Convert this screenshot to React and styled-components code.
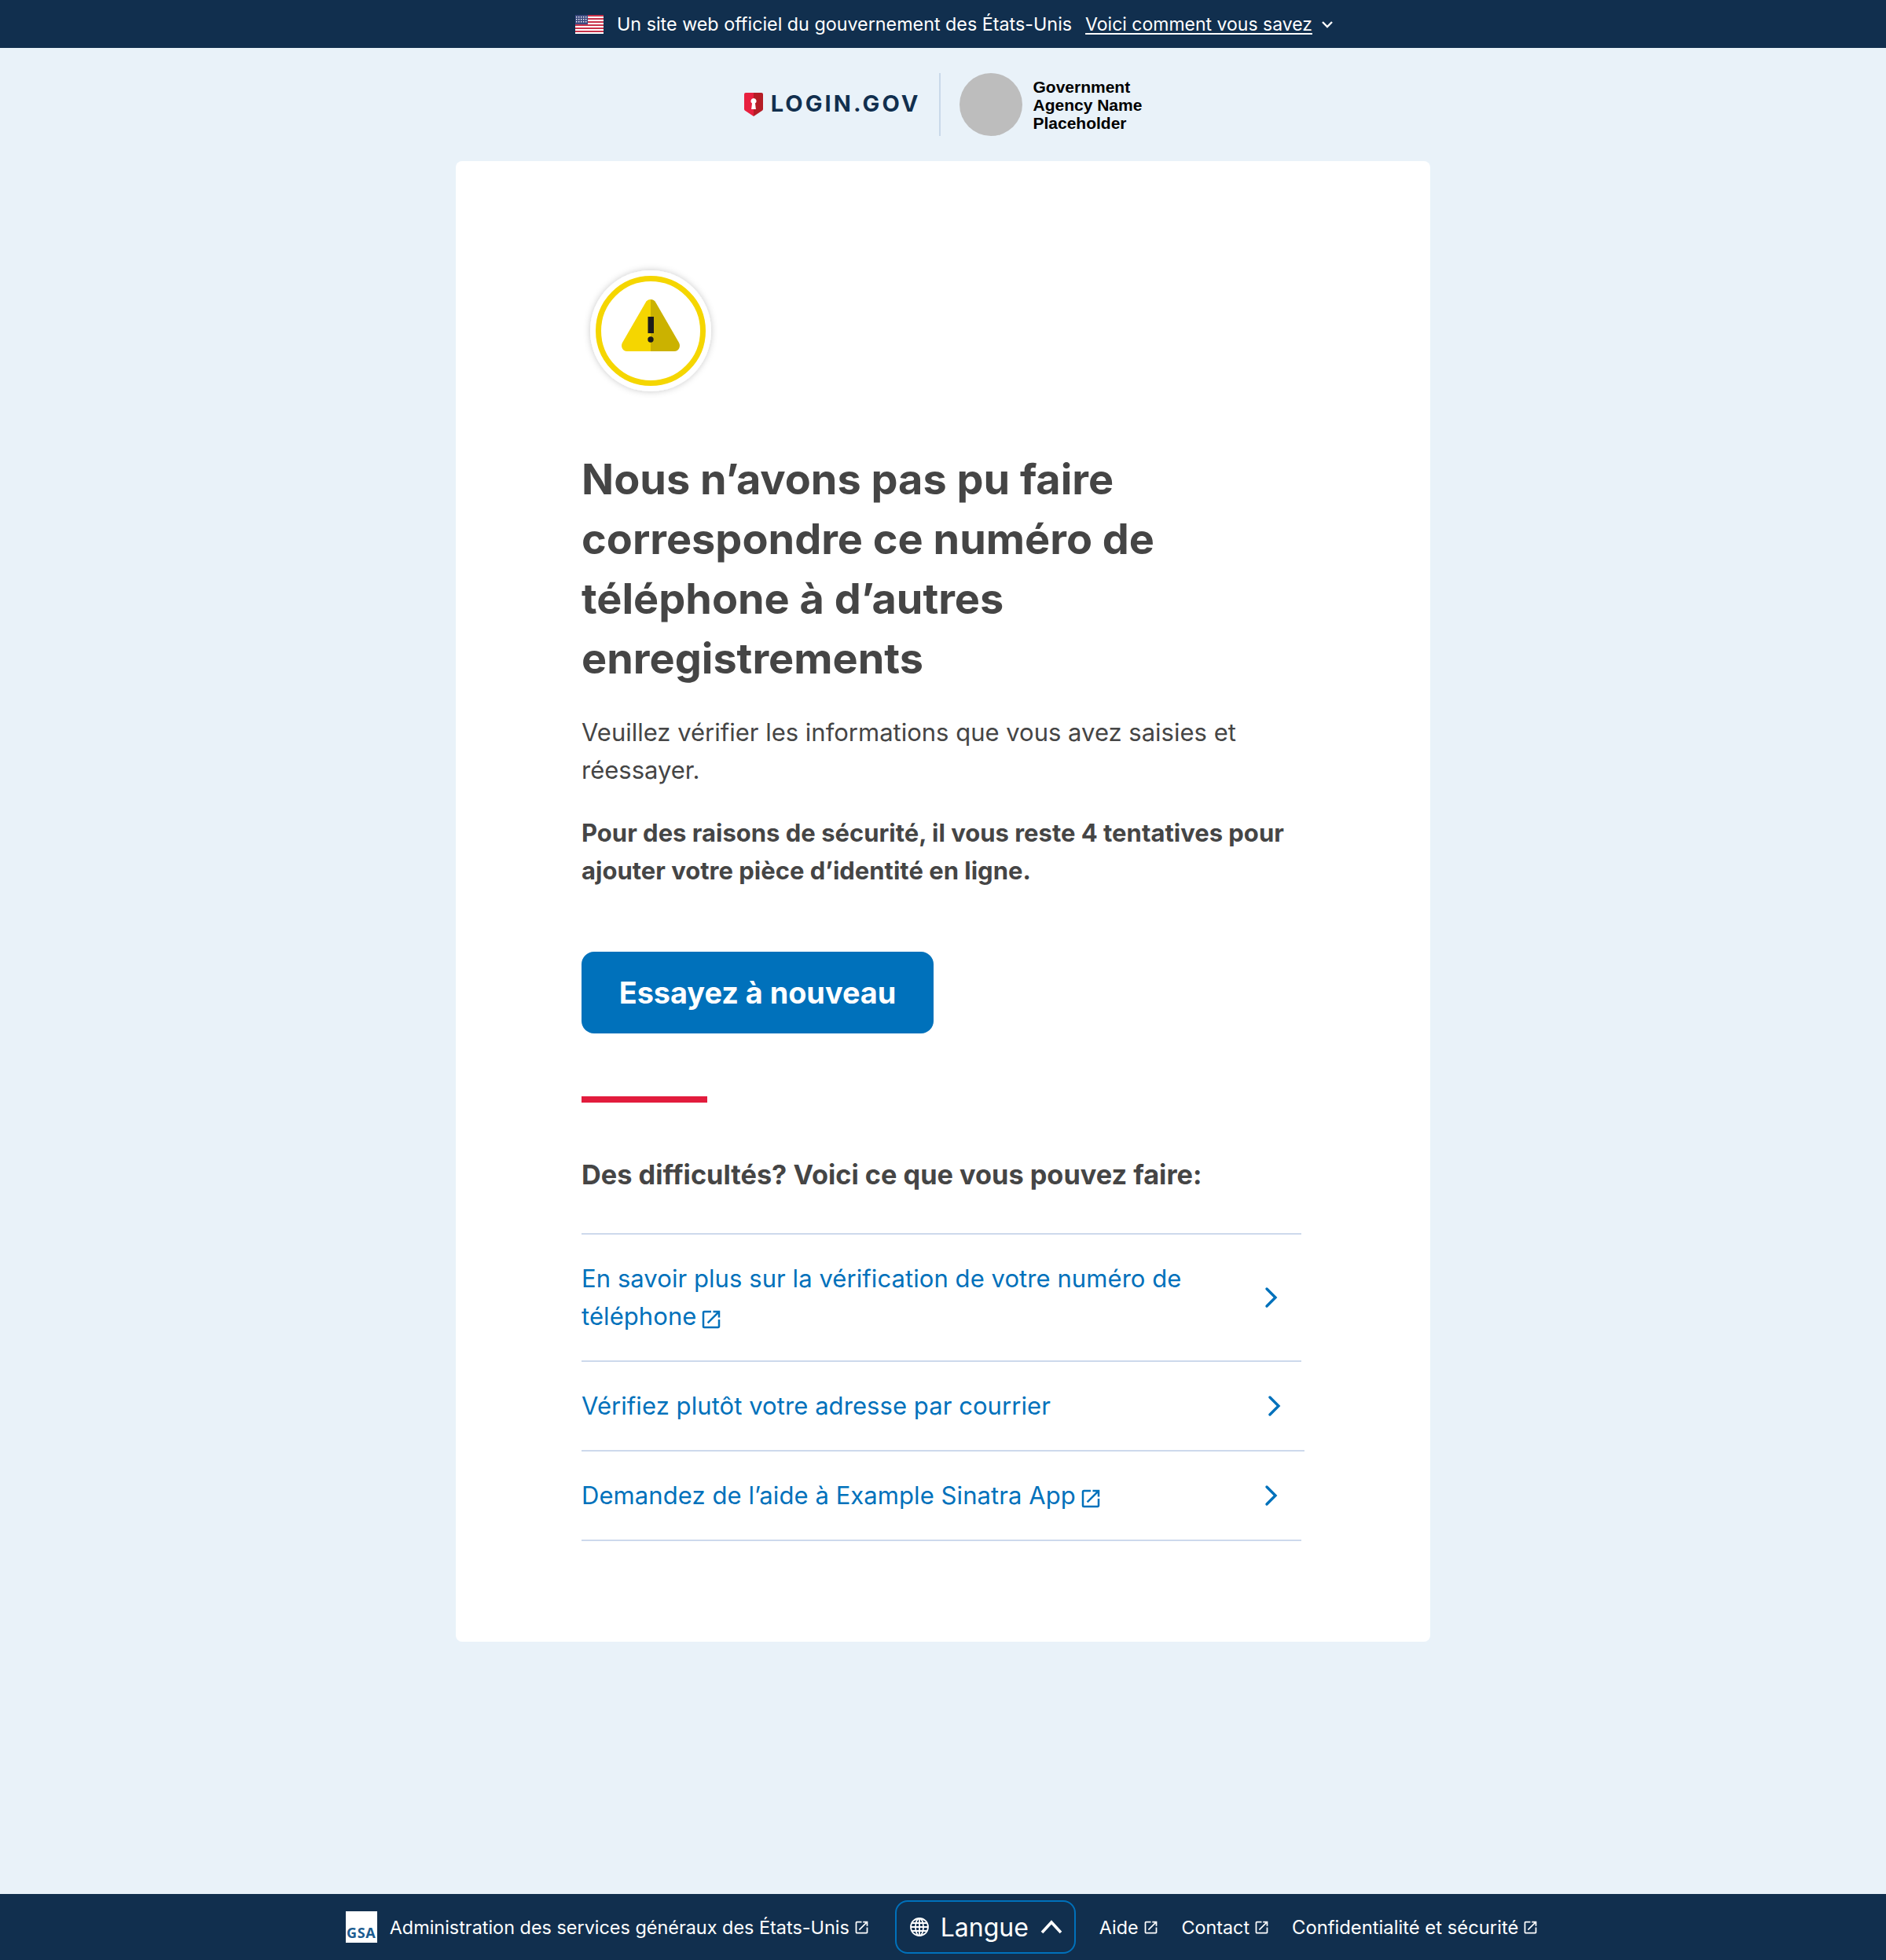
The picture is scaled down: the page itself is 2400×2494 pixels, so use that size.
import React from "react";
import styled, { createGlobalStyle } from "styled-components";

const Global = createGlobalStyle`
  html, body { margin: 0; padding: 0; background: #e9f2f9; }
  * { box-sizing: border-box; }
  body { font-family: Inter, "Noto Sans", sans-serif; color: #454545; }
`;
const Page = styled.div`
  min-height: 2494px; display: flex; flex-direction: column; background: #e9f2f9;
`;
const Banner = styled.div`
  height: 61px; background: #112f4e; color: #fff; display: flex; align-items: center;
  justify-content: center; font-size: 23.3px; padding-left: 30px;
`;
const BannerText = styled.span` margin-left: 17px; `;
const BannerLink = styled.a`
  margin-left: 17px; color: #fff; font-size: 23px; text-decoration: underline; text-underline-offset: 3px;
`;
const BannerChevron = styled.svg` margin-left: 10px; width: 18px; height: 18px; `;
const Header = styled.header`
  height: 144px; display: flex; align-items: center; justify-content: center;
`;
const Logo = styled.div`
  display: flex; align-items: center; gap: 10px; padding-right: 24px;
`;
const LogoText = styled.span`
  font-size: 29px; font-weight: 700; color: #112f4e; letter-spacing: 3.1px; line-height: 1; padding-bottom: 3px;
`;
const Partner = styled.div`
  display: flex; align-items: center; gap: 13px; border-left: 2px solid #c9d9ea; padding-left: 24px; height: 80px;
`;
const AgencyCircle = styled.div` width: 80px; height: 80px; border-radius: 50%; background: #bdbdbd; `;
const AgencyName = styled.div`
  font-family: "Liberation Sans", Arial, sans-serif; font-weight: 700; font-size: 21px; line-height: 23px; color: #000;
`;
const Card = styled.main`
  width: 1240px; margin: 0 auto; background: #fff; border-radius: 8px; padding: 128px 160px;
`;
const Heading = styled.h1`
  margin: 63px 0 0; font-size: 54px; line-height: 76px; font-weight: 700; color: #454545; width: 780px;
`;
const Para = styled.p`
  margin: ${p => p.$top}px 0 0; font-size: 31px; line-height: 48px; font-weight: ${p => p.$bold ? 700 : 400};
`;
const Primary = styled.button`
  display: block; margin-top: 79px; width: 448px; height: 104px; border: 0; border-radius: 16px; background: #0071bb; color: #fff;
  font: 700 37.8px Inter, sans-serif;
`;
const Rule = styled.div` margin-top: 80px; width: 160px; height: 8px; background: #e21c3d; `;
const Troubles = styled.h2`
  margin: 68px 0 0; font-size: 34.3px; line-height: 48px; font-weight: 700;
`;
const Links = styled.ul`
  list-style: none; margin: 50px 0 0; padding: 0; border-top: 2px solid #cdd9ec; width: 916px;
`;
const Row = styled.li`
  display: flex; align-items: center; justify-content: space-between; width: ${p => p.$wide ? 920 : 916}px;
  padding: 32px 28px 32px 0; border-bottom: 2px solid #cdd9ec;
  font-size: 31px; line-height: 48px; letter-spacing: 0.07px; color: #0071bb;
`;
const RowText = styled.span` width: 800px; `;
const Ext = styled.svg`
  width: ${p => p.$s}px; height: ${p => p.$s}px; margin-left: ${p => p.$m}px; vertical-align: ${p => p.$v}px; fill: currentColor;
`;
const Spacer = styled.div` flex: 1; `;
const Footer = styled.footer`
  height: 84px; background: #112f4e; color: #fff; display: flex; align-items: center; justify-content: center;
  font-size: 23.3px; padding-right: 2px;
`;
const Gsa = styled.div`
  width: 40px; height: 40px; background: #fff; color: #1c5c90; font: 700 18px/1 "Noto Sans", sans-serif; letter-spacing: 0.6px;
  display: flex; align-items: flex-end; justify-content: center; margin-right: 16px; padding-bottom: 4px;
`;
const FootLink = styled.span`
  display: inline-flex; align-items: center; margin-left: ${p => p.$m || 0}px; font-size: ${p => p.$fs || 23.3}px;
`;
const LangBtn = styled.div`
  margin: 0 30px 0 32px; width: 230px; height: 68px; border: 2px solid #0071bb; border-radius: 16px; display: flex; align-items: center;
  padding: 0 14px 0 16px; font-size: 32px; justify-content: space-between;
`;

const ExtIcon = ({ s = 21, m = 5, v = -3 }) => (
  <Ext $s={s} $m={m} $v={v} viewBox="0 0 24 24">
    <path d="M19 19H5V5h7V3H5a2 2 0 0 0-2 2v14a2 2 0 0 0 2 2h14c1.1 0 2-.9 2-2v-7h-2v7zM14 3v2h3.59l-9.83 9.83 1.41 1.41L19 6.41V10h2V3h-7z" />
  </Ext>
);
const Chevron = () => (
  <svg width="24" height="28" viewBox="0 0 24 28" fill="none" stroke="#0071bb" strokeWidth="3.4" strokeLinecap="round"><path d="M8 3l11 11L8 25" /></svg>
);
const Flag = () => (
  <svg width="36" height="24" viewBox="0 0 36 24">
    <rect width="36" height="24" fill="#fff" />
    {[0, 4, 8, 12, 16, 20].map(y => <rect key={y} y={y} width="36" height="2" fill="#c8324a" />)}
    <rect width="16" height="12" fill="#3c4a80" />
    {[2, 5, 8].map(y => [2, 5, 8, 11, 14].map(x => <rect key={x + "-" + y} x={x - 1} y={y} width="1.4" height="1.4" fill="#fff" />))}
  </svg>
);
const Shield = () => (
  <svg width="24" height="30" viewBox="0 0 24 30">
    <path d="M0 2a2 2 0 0 1 2-2h10v30L1.500 23A3 3 0 0 1 0 20z" fill="#e8203f" />
    <path d="M24 2a2 2 0 0 0-2-2H12v30l10.500-7a3 3 0 0 0 1.500-3z" fill="#b51d26" />
    <path d="M12 7a3.600 3.600 0 0 1 2 6.600l.9 7.400h-5.800l.9-7.400A3.600 3.600 0 0 1 12 7z" fill="#fff" />
  </svg>
);
const Warning = () => (
  <svg width="176" height="176" viewBox="0 0 176 176" style={{ display: "block" }}>
    <defs>
      <filter id="s" x="-20%" y="-20%" width="140%" height="140%"><feDropShadow dx="0" dy="0" stdDeviation="4" floodColor="#000" floodOpacity=".22" /></filter>
    </defs>
    <circle cx="88" cy="88" r="77" fill="#fff" filter="url(#s)" />
    <circle cx="88" cy="88" r="66.5" fill="#fff" stroke="#f5d600" strokeWidth="7" />
    <path d="M88 48c-3 0-5 1.5-6.5 4L52 103c-2.500 4.500 0 11 6 11h30z" fill="#f5d600" />
    <path d="M88 48c3 0 5 1.500 6.500 4L124 103c2.500 4.500 0 11-6 11H88z" fill="#cbb200" />
    <rect x="84.500" y="70" width="7.500" height="21" fill="#1b1b1b" />
    <circle cx="88" cy="99" r="3.700" fill="#1b1b1b" />
  </svg>
);

export default function App() {
  return (
    <Page>
      <Global />
      <Banner>
        <Flag />
        <BannerText>Un site web officiel du gouvernement des États-Unis</BannerText>
        <BannerLink>Voici comment vous savez</BannerLink>
        <BannerChevron viewBox="0 0 18 18" fill="none" stroke="#fff" strokeWidth="2.400"><path d="M3 6l6 6 6-6" /></BannerChevron>
      </Banner>
      <Header>
        <Logo><Shield /><LogoText>LOGIN.GOV</LogoText></Logo>
        <Partner>
          <AgencyCircle />
          <AgencyName>Government<br />Agency Name<br />Placeholder</AgencyName>
        </Partner>
      </Header>
      <Card>
        <Warning />
        <Heading>Nous n’avons pas pu faire correspondre ce numéro de téléphone à d’autres enregistrements</Heading>
        <Para $top={32}>Veuillez vérifier les informations que vous avez saisies et réessayer.</Para>
        <Para $top={32} $bold>Pour des raisons de sécurité, il vous reste 4 tentatives pour ajouter votre pièce d’identité en ligne.</Para>
        <Primary>Essayez à nouveau</Primary>
        <Rule />
        <Troubles>Des difficultés? Voici ce que vous pouvez faire:</Troubles>
        <Links>
          <Row><RowText>En savoir plus sur la vérification de votre numéro de téléphone<ExtIcon s={30} m={4} v={-8} /></RowText><Chevron /></Row>
          <Row $wide><RowText>Vérifiez plutôt votre adresse par courrier</RowText><Chevron /></Row>
          <Row><RowText>Demandez de l’aide à Example Sinatra App<ExtIcon s={30} m={4} v={-8} /></RowText><Chevron /></Row>
        </Links>
      </Card>
      <Spacer />
      <Footer>
        <Gsa>GSA</Gsa>
        <FootLink $fs={23.42}>Administration des services généraux des États-Unis<ExtIcon /></FootLink>
        <LangBtn>
          <svg width="26" height="26" viewBox="0 0 26 26" fill="none" stroke="#fff" strokeWidth="1.800">
            <circle cx="13" cy="13" r="11" /><ellipse cx="13" cy="13" rx="5" ry="11" /><path d="M2 13h22M3.500 8h19M3.500 18h19M13 2v22" />
          </svg>
          Langue
          <svg width="30" height="20" viewBox="0 0 30 20" fill="none" stroke="#fff" strokeWidth="3.600"><path d="M3 17L15 4l12 13" /></svg>
        </LangBtn>
        <FootLink>Aide<ExtIcon /></FootLink>
        <FootLink $m={29}>Contact<ExtIcon /></FootLink>
        <FootLink $m={28} $fs={23.8}>Confidentialité et sécurité<ExtIcon /></FootLink>
      </Footer>
    </Page>
  );
}
